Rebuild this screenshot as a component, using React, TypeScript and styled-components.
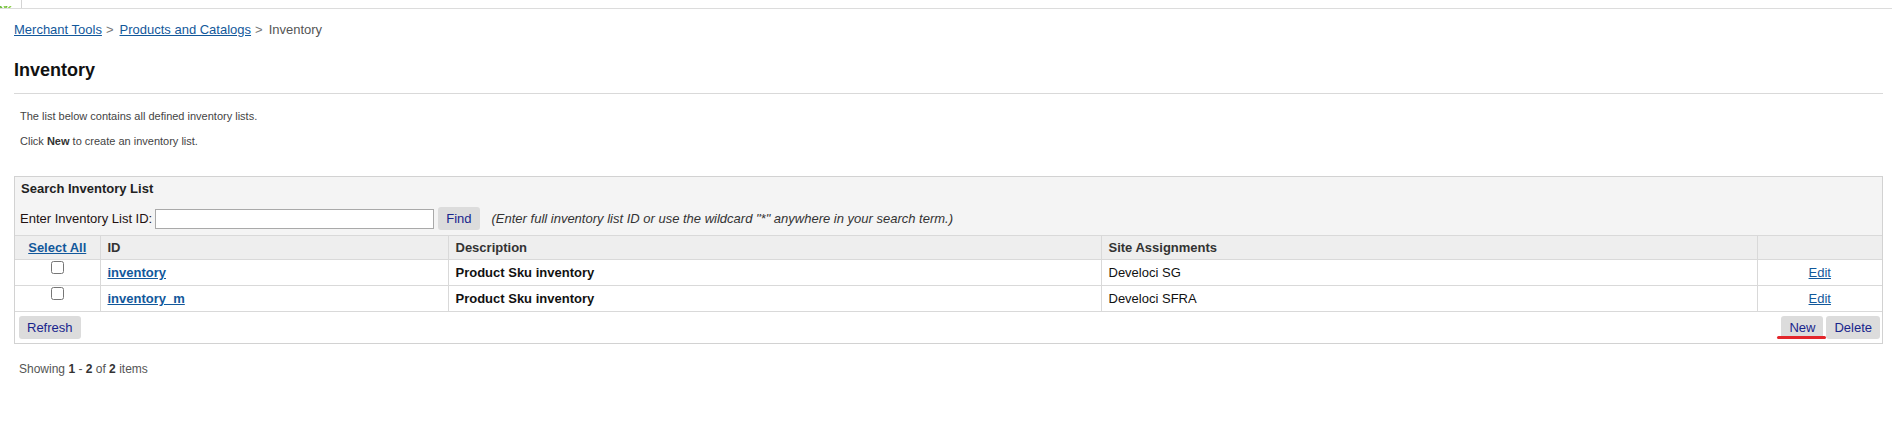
import React from "react";
import styled, { createGlobalStyle } from "styled-components";

const GlobalStyle = createGlobalStyle`
  html, body {
    margin: 0;
    padding: 0;
    background: #ffffff;
    font-family: "Liberation Sans", Arial, Helvetica, sans-serif;
    color: #222;
  }
`;

const TopStrip = styled.div`
  display: flex;
  height: 8px;
  border-bottom: 1px solid #dcdcdc;
  overflow: hidden;
`;

const StripIcon = styled.div`
  width: 22px;
  flex: none;
  border-right: 1px solid #d4d4d4;
  box-sizing: border-box;
  overflow: hidden;
`;

const Page = styled.div`
  padding: 0 9px 0 14px;
`;

const Breadcrumb = styled.div`
  margin-top: 13px;
  font-size: 13px;
  line-height: 15px;
  color: #555;
`;

const Crumb = styled.a`
  color: #12589b;
  text-decoration: underline;
  cursor: pointer;
`;

const Sep = styled.span`
  color: #777;
  margin: 0 6px 0 4px;
`;

const Title = styled.h1`
  margin: 22px 0 0;
  font-size: 18px;
  line-height: 22px;
  font-weight: bold;
  color: #111;
`;

const Rule = styled.hr`
  margin: 12px 0 0;
  border: none;
  border-top: 1px solid #d9d9d9;
  height: 0;
`;

const Info = styled.p<{ $first?: boolean }>`
  margin: ${(p) => (p.$first ? "16px" : "12px")} 0 0;
  padding-left: 6px;
  font-size: 11px;
  line-height: 13px;
  color: #444;

  b {
    color: #333;
  }
`;

const Panel = styled.div`
  margin-top: 28px;
  border: 1px solid #d2d2d2;
`;

const SearchArea = styled.div`
  background: #f4f4f4;
  padding: 4px 5px 5px 5px;
`;

const SearchTitle = styled.div`
  font-size: 13px;
  line-height: 15px;
  font-weight: bold;
  color: #222;
  padding-left: 1px;
`;

const SearchRow = styled.div`
  display: flex;
  align-items: center;
  margin-top: 11px;
  height: 23px;
  font-size: 13px;
`;

const Label = styled.label`
  color: #221111;
  margin-right: 3px;
`;

const TextInput = styled.input`
  width: 279px;
  height: 20px;
  box-sizing: border-box;
  border: 1px solid #a9a9a9;
  background: #fff;
  margin: 0 4px 0 0;
  padding: 1px 3px;
  font: inherit;
`;

const Button = styled.button`
  height: 23px;
  padding: 0 8px;
  border: none;
  border-radius: 3px;
  background: #dcdcdc;
  color: #18258c;
  font-family: "Liberation Sans", Arial, Helvetica, sans-serif;
  font-size: 13px;
  cursor: pointer;
`;

const Hint = styled.span`
  margin-left: 12px;
  font-style: italic;
  color: #333;
`;

const Table = styled.table`
  width: 100%;
  border-collapse: collapse;
  table-layout: fixed;
  font-size: 13px;
`;

const HeadCell = styled.th<{ $center?: boolean }>`
  height: 23px;
  padding: 0 7px;
  background: #eeeeee;
  border-top: 1px solid #d9d9d9;
  border-bottom: 1px solid #d9d9d9;
  border-left: 1px solid #d9d9d9;
  text-align: ${(p) => (p.$center ? "center" : "left")};
  font-weight: bold;
  color: #333;

  &:first-child {
    border-left: none;
  }
`;

const Cell = styled.td<{ $align?: "left" | "center"; $bold?: boolean }>`
  height: 24px;
  padding: 0 7px;
  border-bottom: 1px solid #d9d9d9;
  border-left: 1px solid #d9d9d9;
  text-align: ${(p) => p.$align ?? "left"};
  font-weight: ${(p) => (p.$bold ? "bold" : "normal")};
  color: #111;

  &:first-child {
    border-left: none;
  }
`;

const CheckCell = styled.td`
  height: 24px;
  padding: 1px 0 0;
  vertical-align: top;
  text-align: center;
  border-bottom: 1px solid #d9d9d9;
`;

const Check = styled.input`
  width: 13px;
  height: 13px;
  margin: 0;
`;

const TableLink = styled.a<{ $bold?: boolean }>`
  color: #12589b;
  text-decoration: underline;
  font-weight: ${(p) => (p.$bold ? "bold" : "normal")};
  cursor: pointer;
`;

const Footer = styled.div`
  display: flex;
  align-items: center;
  padding: 4px 2px 4px 4px;
`;

const Spacer = styled.div`
  flex: 1;
`;

const Actions = styled.div`
  display: flex;
  gap: 3px;
`;

const Marked = styled.div`
  position: relative;

  &::after {
    content: "";
    position: absolute;
    left: -4px;
    right: -3px;
    bottom: 0;
    height: 3px;
    border-radius: 2px;
    background: #e3262b;
  }
`;

const Showing = styled.div`
  margin-top: 18px;
  padding-left: 5px;
  font-size: 12px;
  line-height: 14px;
  color: #555;

  b {
    color: #333;
  }
`;

const rows = [
  { id: "inventory", description: "Product Sku inventory", site: "Develoci SG" },
  { id: "inventory_m", description: "Product Sku inventory", site: "Develoci SFRA" },
];

export default function App() {
  return (
    <>
      <GlobalStyle />
      <TopStrip>
        <StripIcon>
          <svg width="14" height="8" viewBox="0 0 14 8">
            <path d="M0 0 L3 4 L7 0" fill="none" stroke="#6dbb3f" strokeWidth="1.8" />
            <path d="M4 0 L7 3.5 L11 0" fill="none" stroke="#8fd14f" strokeWidth="1.6" />
          </svg>
        </StripIcon>
      </TopStrip>
      <Page>
        <Breadcrumb>
          <Crumb>Merchant Tools</Crumb>
          <Sep>&gt;</Sep>
          <Crumb>Products and Catalogs</Crumb>
          <Sep>&gt;</Sep>
          Inventory
        </Breadcrumb>
        <Title>Inventory</Title>
        <Rule />
        <Info $first>The list below contains all defined inventory lists.</Info>
        <Info>
          Click <b>New</b> to create an inventory list.
        </Info>

        <Panel>
          <SearchArea>
            <SearchTitle>Search Inventory List</SearchTitle>
            <SearchRow>
              <Label>Enter Inventory List ID:</Label>
              <TextInput type="text" />
              <Button>Find</Button>
              <Hint>
                (Enter full inventory list ID or use the wildcard "*" anywhere in your search term.)
              </Hint>
            </SearchRow>
          </SearchArea>

          <Table>
            <colgroup>
              <col style={{ width: 85 }} />
              <col style={{ width: 348 }} />
              <col style={{ width: 653 }} />
              <col style={{ width: 656 }} />
              <col />
            </colgroup>
            <thead>
              <tr>
                <HeadCell $center>
                  <TableLink $bold>Select All</TableLink>
                </HeadCell>
                <HeadCell>ID</HeadCell>
                <HeadCell>Description</HeadCell>
                <HeadCell>Site Assignments</HeadCell>
                <HeadCell />
              </tr>
            </thead>
            <tbody>
              {rows.map((r) => (
                <tr key={r.id}>
                  <CheckCell>
                    <Check type="checkbox" />
                  </CheckCell>
                  <Cell>
                    <TableLink $bold>{r.id}</TableLink>
                  </Cell>
                  <Cell $bold>{r.description}</Cell>
                  <Cell>{r.site}</Cell>
                  <Cell $align="center">
                    <TableLink>Edit</TableLink>
                  </Cell>
                </tr>
              ))}
            </tbody>
          </Table>

          <Footer>
            <Button>Refresh</Button>
            <Spacer />
            <Actions>
              <Marked>
                <Button>New</Button>
              </Marked>
              <Button>Delete</Button>
            </Actions>
          </Footer>
        </Panel>

        <Showing>
          Showing <b>1</b> - <b>2</b> of <b>2</b> items
        </Showing>
      </Page>
    </>
  );
}
